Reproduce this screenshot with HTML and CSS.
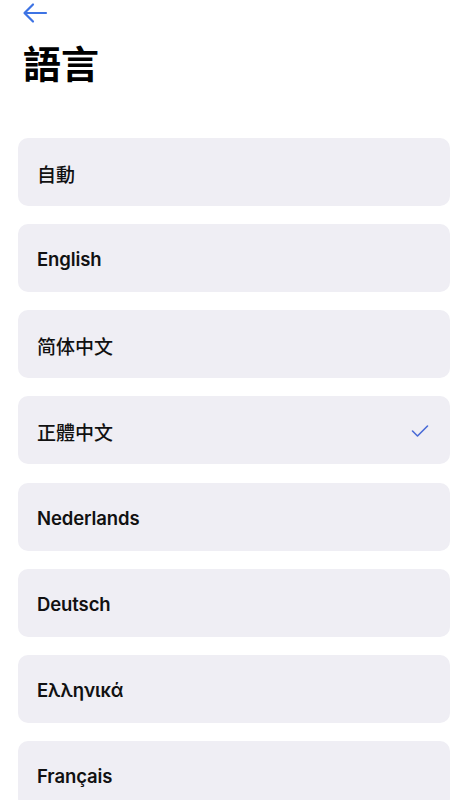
FILE: index.html
```html
<!DOCTYPE html>
<html lang="zh-Hant">
<head>
    <meta charset="UTF-8">
    <meta name="viewport" content="width=device-width, initial-scale=1.0">
    <title>語言</title>
    <link rel="stylesheet" href="styles.css">
</head>
<body>
    <div class="page">
        <div class="top-bar">
            <button class="back-btn" aria-label="返回">
                <svg width="26" height="22" viewBox="0 0 26 22">
                    <path d="M24 11H3M11 2.5L2.5 11L11 19.5" fill="none" stroke="#3d73e4" stroke-width="2.2" stroke-linecap="round" stroke-linejoin="round"/>
                </svg>
            </button>
        </div>
        <h1 class="page-title">語言</h1>
        <ul class="lang-list">
            <li class="lang-item cjk">自動</li>
            <li class="lang-item">English</li>
            <li class="lang-item cjk">简体中文</li>
            <li class="lang-item cjk">正體中文
                <svg class="check" width="18" height="14" viewBox="0 0 18 14">
                    <path d="M1.5 7L6.5 12L16.5 2" fill="none" stroke="#4a6bd6" stroke-width="1.6" stroke-linecap="round" stroke-linejoin="round"/>
                </svg>
            </li>
            <li class="lang-item">Nederlands</li>
            <li class="lang-item">Deutsch</li>
            <li class="lang-item">Ελληνικά</li>
            <li class="lang-item">Français</li>
        </ul>
    </div>
</body>
</html>
```

FILE: styles.css
```css
body{
  margin: 0;
  background: #fff;
  font-family: Inter, "Noto Sans CJK TC", sans-serif;
  color: #000;
}
.page{
  padding: 0 19px 0 18px;
}
.top-bar{
  height: 26px;
}
.back-btn{
  display: block;
  margin-left: 4px;
  padding: 2px 0 0;
  border: none;
  background: none;
  cursor: pointer;
}
.page-title{
  margin: 10px 0 0 5px;
  font-size: 38px;
  font-weight: 700;
  line-height: 52px;
  font-family: "Noto Sans CJK TC", sans-serif;
}
.lang-list{
  list-style: none;
  margin: 50px 0 0;
  padding: 0;
  display: flex;
  flex-direction: column;
  gap: 18.15px;
}
.lang-item{
  display: flex;
  align-items: center;
  justify-content: space-between;
  height: 68px;
  padding: 2px 21px 0 19px;
  background: #efeef4;
  border-radius: 10px;
  font-size: 18.5px;
  font-weight: 600;
  letter-spacing: -0.1px;
  color: #111;
  box-sizing: border-box;
}
.lang-item.cjk{
  font-family: "Noto Sans CJK TC", sans-serif;
  font-size: 19px;
  font-weight: 500;
  letter-spacing: 0;
}
.check{
  display: block;
}
```
